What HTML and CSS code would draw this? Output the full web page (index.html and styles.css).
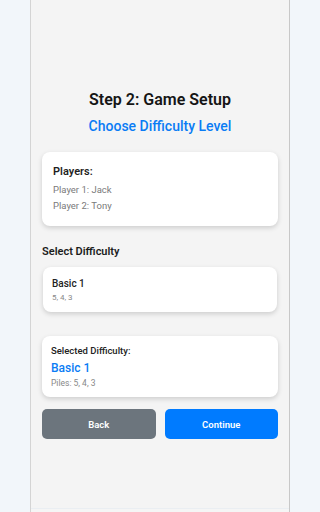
FILE: index.html
```html
<!DOCTYPE html>
<html>
<head>
<meta charset="utf-8">
<link rel="stylesheet" href="styles.css">
</head>
<body>
<div class="page">
  <main class="panel">
    <h1 class="title">Step 2: Game Setup</h1>
    <h2 class="subtitle">Choose Difficulty Level</h2>

    <section class="card players">
      <div class="card-head">Players:</div>
      <div class="player">Player 1: Jack</div>
      <div class="player">Player 2: Tony</div>
    </section>

    <div class="section-label">Select Difficulty</div>

    <div class="card option">
      <div class="option-name">Basic 1</div>
      <div class="option-piles">5, 4, 3</div>
    </div>

    <section class="card selected">
      <div class="selected-head">Selected Difficulty:</div>
      <div class="selected-name">Basic 1</div>
      <div class="selected-piles">Piles: 5, 4, 3</div>
    </section>

    <div class="actions">
      <button class="btn btn-back">Back</button>
      <button class="btn btn-continue">Continue</button>
    </div>

    <div class="spacer"></div>
    <div class="panel-foot"></div>
  </main>
</div>
</body>
</html>
```

FILE: styles.css
```css
* { box-sizing: border-box; }
html, body { margin: 0; padding: 0; }
body {
  background: #f2f6fa;
  font-family: Roboto, "Liberation Sans", Arial, sans-serif;
  color: #1a1a1a;
}
.page {
  display: flex;
  justify-content: center;
  height: 512px;
  overflow: hidden;
}
.panel {
  width: 260px;
  height: 512px;
  background: #f4f4f4;
  border-left: 1px solid #d4d4d4;
  border-right: 1px solid #c8c8c8;
  padding: 90px 11px 0;
  display: flex;
  flex-direction: column;
}
.title {
  margin: 0;
  font-size: 16px;
  line-height: 20px;
  font-weight: 600;
  text-align: center;
  color: #151515;
}
.subtitle {
  margin: 7px 0 0;
  font-size: 14px;
  line-height: 18px;
  font-weight: 500;
  text-align: center;
  color: #0a7cf5;
}
.card {
  background: #fff;
  border-radius: 8px;
  box-shadow: 0 2px 5px rgba(0,0,0,0.16);
}
.players {
  margin-top: 17px;
  padding: 13px 11px 12px;
}
.card-head {
  font-size: 11px;
  line-height: 14px;
  font-weight: 600;
  color: #1f1f1f;
  margin-bottom: 3px;
}
.player {
  font-size: 9.5px;
  line-height: 16px;
  color: #7a7a7a;
}
.section-label {
  margin-top: 19px;
  font-size: 11px;
  line-height: 14px;
  font-weight: 600;
  color: #1c1c1c;
}
.option {
  margin: 8px 1px 0;
  padding: 10px 9px 9px;
}
.option-name {
  font-size: 10px;
  line-height: 13px;
  font-weight: 500;
  color: #222;
}
.option-piles {
  margin-top: 2px;
  font-size: 8px;
  line-height: 11px;
  color: #888;
}
.selected {
  margin-top: 24px;
  padding: 9px 9px 8px;
}
.selected-head {
  font-size: 9.5px;
  line-height: 12px;
  font-weight: 500;
  color: #222;
}
.selected-name {
  margin-top: 4px;
  font-size: 12px;
  line-height: 15px;
  font-weight: 500;
  color: #0a7cf5;
}
.selected-piles {
  margin-top: 2px;
  font-size: 8.5px;
  line-height: 11px;
  color: #888;
}
.actions {
  margin-top: 12px;
  display: grid;
  grid-template-columns: 1fr 1fr;
  gap: 9px;
}
.btn {
  height: 30px;
  border: none;
  border-radius: 5px;
  color: #fff;
  font-family: inherit;
  font-size: 9.5px;
  font-weight: 600;
  padding: 0;
}
.btn-back { background: #6c757d; }
.btn-continue { background: #007bff; }
.spacer { flex: 1; }
.panel-foot {
  height: 4px;
  margin: 0 -11px;
  border-top: 1px solid #eaeef2;
  background: #f5f5f5;
}
```
